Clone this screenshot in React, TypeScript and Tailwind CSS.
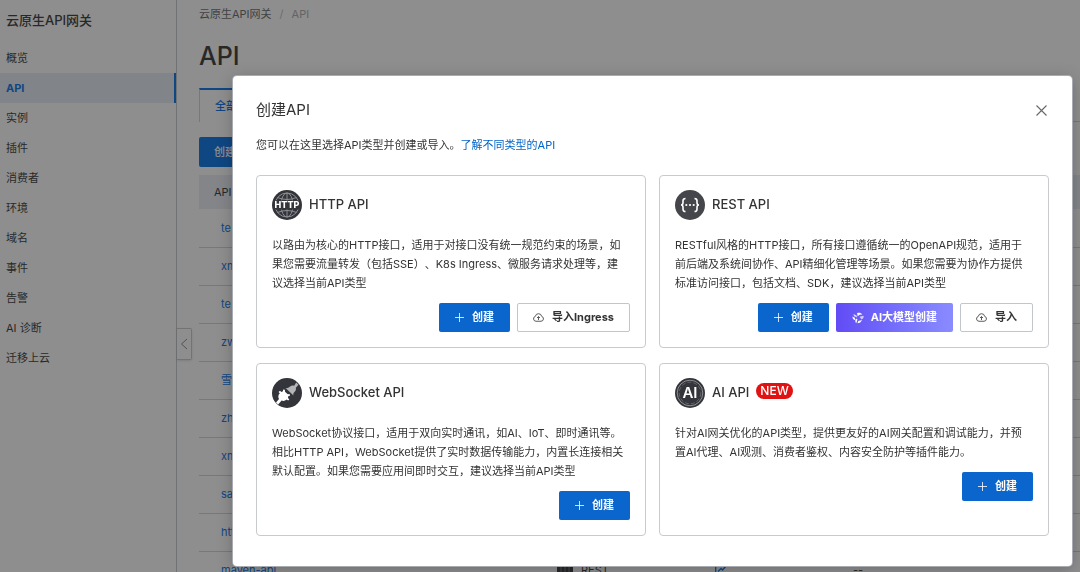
import type { ReactNode } from 'react';

type MenuItem = {
    label: string;
    active?: boolean;
}

const menu: MenuItem[] = [
    { label: '概览' },
    { label: 'API', active: true },
    { label: '实例' },
    { label: '插件' },
    { label: '消费者' },
    { label: '环境' },
    { label: '域名' },
    { label: '事件' },
    { label: '告警' },
    { label: 'AI 诊断' },
    { label: '迁移上云' },
];

const apis = ['te', 'xm', 'te', 'zw', '雪', 'zh', 'xm', 'sa', 'htt'];

function PlusIcon() {
    return (
        <svg className="h-[9px] w-[9px]" viewBox="0 0 9 9" fill="none" stroke="currentColor" strokeWidth="0.8" aria-hidden="true">
            <path d="M4.5 0v9M0 4.5h9" />
        </svg>
    );
}

function CloudUploadIcon() {
    return (
        <svg className="h-[11px] w-[11px]" viewBox="0 0 22 20" fill="none" stroke="currentColor" strokeWidth="1.6" strokeLinejoin="round" aria-hidden="true">
            <path d="M6 17.5a5 5 0 0 1-1.3-9.8 6.4 6.4 0 0 1 12.6 0A5 5 0 0 1 16 17.5Z" />
            <path d="M11 15V8.5M8 11l3-3 3 3" />
        </svg>
    );
}

function SparkIcon() {
    return (
        <svg className="h-3 w-3" viewBox="0 0 24 24" fill="currentColor" aria-hidden="true">
            <path d="M3 4l6 3 1.500 4L4 8.500Z" opacity=".75" />
            <path d="M10 2.500c4-2 8.500-.5 10.500 2.500l-5.500.5-3.500 3Z" />
            <path d="M1 9l4.500 2.500 1.500 5.500C3 15.500.5 12.500 1 9Z" />
            <path d="M8 13l3 2-2.500 7.500c-2-1.500-2.500-5.500-.5-9.500Z" />
            <path d="M15 9.500l8-2c1 3-.5 6-4 7.500Z" opacity=".7" />
            <path d="M12.500 18l7.500-2c-1.500 4-5 6.500-9 6.500Z" />
        </svg>
    );
}

function HttpIcon() {
    return (
        <svg className="h-[30px] w-[30px]" viewBox="0 0 30 30" aria-hidden="true">
            <circle cx="15" cy="15" r="15" fill="#33353a" />
            <g fill="none" stroke="#8b8d92" strokeWidth="1">
                <circle cx="15" cy="15" r="12" />
                <ellipse cx="15" cy="15" rx="6" ry="12" />
                <path d="M15 3v24M5.500 7.500q9.500 4 19 0M5.500 22.500q9.500-4 19 0" />
            </g>
            <rect x="1" y="10.500" width="28" height="9" fill="#33353a" />
            <text x="15" y="18.300" textAnchor="middle" fill="#fff" fontSize="9" fontWeight="800" fontFamily="Inter, sans-serif">HTTP</text>
        </svg>
    );
}

function RestIcon() {
    return (
        <svg className="h-[30px] w-[30px]" viewBox="0 0 30 30" aria-hidden="true">
            <circle cx="15" cy="15" r="15" fill="#44464b" />
            <g fill="none" stroke="#fff" strokeWidth="1.600">
                <path d="M10.500 8.500c-2 0-2.500.8-2.500 2.300v2c0 1.400-.6 2.200-2 2.200 1.400 0 2 .8 2 2.200v2c0 1.500.5 2.300 2.500 2.300" />
                <path d="M19.500 8.500c2 0 2.500.8 2.500 2.300v2c0 1.400.6 2.200 2 2.200-1.400 0-2 .8-2 2.200v2c0 1.500-.5 2.300-2.500 2.300" />
            </g>
            <g fill="#fff">
                <circle cx="11.300" cy="15" r="1.100" />
                <circle cx="15" cy="15" r="1.100" />
                <circle cx="18.700" cy="15" r="1.100" />
            </g>
        </svg>
    );
}

function WebSocketIcon() {
    return (
        <svg className="h-[30px] w-[30px]" viewBox="0 0 30 30" aria-hidden="true">
            <circle cx="15" cy="15" r="15" fill="#33353a" />
            <path d="M13.500 10c1.500.5 3-.2 4.300-1.300 1.500-1.200 3-1.500 4.400-.9l2-3.300 2.300 2.300-2.700 2.900c.5 1.600 0 3-1.300 4.300-1.200 1.200-1.500 2.200-1 3.400Z" fill="#b4b5b7" />
            <path d="M4 24.500l3-3.500c-1.200-2-.8-4.300.8-5.700l-1.300-1.300 1.500-1.200 1.400 1.200 1.500-.8.3-1.600 1.700.2.100 2 2.800 2.400 1.900-.1.200 1.700-1.700.5-.2 1.700 1.300 1.400-1.200 1.200-1.500-1c-1.600 1.400-3.400 1.700-5 .9l-3.400 4q-1.300-.9-2.200-2Z" fill="#fff" />
        </svg>
    );
}

function AiIcon() {
    return (
        <svg className="h-[30px] w-[30px]" viewBox="0 0 30 30" aria-hidden="true">
            <circle cx="15" cy="15" r="15" fill="#33353a" />
            <circle cx="15" cy="15" r="12.800" fill="none" stroke="#a2a4a8" strokeWidth="0.800" />
            <circle cx="15" cy="15" r="10.800" fill="none" stroke="#7d7f84" strokeWidth="0.600" strokeDasharray="4 2" />
            <text x="15" y="20.300" textAnchor="middle" fill="#fff" fontSize="15" fontWeight="600" fontFamily="Inter, sans-serif">AI</text>
        </svg>
    );
}

function CreateButton() {
    return (
        <button className="flex h-[29px] items-center gap-2 rounded-xs bg-[#0a66cc] px-4 font-bold text-white">
            <PlusIcon />
            创建
        </button>
    );
}

function ImportButton({ label }: { label: string }) {
    return (
        <button className="flex h-[29px] items-center gap-2 rounded-xs border border-[#c0c6cc] bg-white px-[15px] font-bold text-[#333]">
            <CloudUploadIcon />
            {label}
        </button>
    );
}

type CardProps = {
    icon: ReactNode;
    title: string;
    isNew?: boolean;
    description: string;
    children: ReactNode;
}

function ApiCard({ icon, title, isNew, description, children }: CardProps) {
    return (
        <section className="rounded border border-[#c8cacd] px-[15px] pt-[14px] pb-[15px]">
            <div className="flex gap-[7px]">
                {icon}
                <h3 className="mt-[5px] text-[13px] leading-[18px] font-medium text-[#333]">{title}</h3>
                {isNew && (
                    <span className="mt-[5px] h-4 rounded-full bg-[#e01212] px-1 text-xs leading-4 font-medium text-white">NEW</span>
                )}
            </div>
            <p className="mt-4 pr-1 leading-[19px] text-[#333]">{description}</p>
            <div className="mt-[10px] flex justify-end gap-[7px]">{children}</div>
        </section>
    );
}

function CreateDialog() {
    return (
        <div className="fixed inset-0 overflow-hidden bg-[#1e1e1e]/50 pt-[76px] pr-2 pl-[233px]">
            <div role="dialog" aria-labelledby="dialog-title" className="rounded bg-white px-[23px] pt-6 pb-[30px] shadow-[0_0_0_1px_#a9abb2,0_3px_16px_rgba(0,0,0,0.25)]">
                <div className="flex items-center justify-between">
                    <h2 id="dialog-title" className="text-[15px] leading-5 text-[#333]">创建API</h2>
                    <button aria-label="关闭" className="p-0.5 text-[#666]">
                        <svg className="h-[11px] w-[11px]" viewBox="0 0 11 11" fill="none" stroke="currentColor" strokeWidth="1.100">
                            <path d="M.5.5l10 10M10.500.5l-10 10" />
                        </svg>
                    </button>
                </div>
                <p className="mt-[15px] leading-5 text-[#333]">
                    您可以在这里选择API类型并创建或导入。
                    <a href="#types" className="text-[#0064c8]">了解不同类型的API</a>
                </p>
                <div className="mt-5 grid grid-cols-2 gap-x-[13px] gap-y-[15px]">
                    <ApiCard
                        icon={<HttpIcon />}
                        title="HTTP API"
                        description="以路由为核心的HTTP接口，适用于对接口没有统一规范约束的场景，如果您需要流量转发（包括SSE）、K8s Ingress、微服务请求处理等，建议选择当前API类型"
                    >
                        <CreateButton />
                        <ImportButton label="导入Ingress" />
                    </ApiCard>
                    <ApiCard
                        icon={<RestIcon />}
                        title="REST API"
                        description="RESTful风格的HTTP接口，所有接口遵循统一的OpenAPI规范，适用于前后端及系统间协作、API精细化管理等场景。如果您需要为协作方提供标准访问接口，包括文档、SDK，建议选择当前API类型"
                    >
                        <CreateButton />
                        <button className="flex h-[29px] items-center gap-[7px] rounded-xs bg-linear-to-r from-[#624bf5] to-[#8a8bff] px-4 font-bold text-white">
                            <SparkIcon />
                            AI大模型创建
                        </button>
                        <ImportButton label="导入" />
                    </ApiCard>
                    <ApiCard
                        icon={<WebSocketIcon />}
                        title="WebSocket API"
                        description="WebSocket协议接口，适用于双向实时通讯，如AI、IoT、即时通讯等。相比HTTP API，WebSocket提供了实时数据传输能力，内置长连接相关默认配置。如果您需要应用间即时交互，建议选择当前API类型"
                    >
                        <CreateButton />
                    </ApiCard>
                    <ApiCard
                        icon={<AiIcon />}
                        title="AI API"
                        isNew
                        description="针对AI网关优化的API类型，提供更友好的AI网关配置和调试能力，并预置AI代理、AI观测、消费者鉴权、内容安全防护等插件能力。"
                    >
                        <CreateButton />
                    </ApiCard>
                </div>
            </div>
        </div>
    );
}

export default function App() {
    return (
        <div className="flex h-screen overflow-hidden bg-white font-[Inter,'Noto_Sans_CJK_SC',sans-serif] text-[11px] text-[#333] [text-spacing-trim:space-all]">
            <aside className="w-[177px] shrink-0 border-r border-[#c4c6c8]">
                <h2 className="mt-[10px] mb-[13px] pl-[6px] text-[13px] leading-5 font-medium">云原生API网关</h2>
                <nav>
                    {menu.map((item) => (
                        <a
                            key={item.label}
                            href="#menu"
                            className={item.active
                                ? 'block border-r-2 border-[#0070e8] bg-[#e4eaf5] pl-[6px] leading-[30px] font-bold text-[#0070e8]'
                                : 'block pl-[6px] leading-[30px]'}
                        >
                            {item.label}
                        </a>
                    ))}
                </nav>
            </aside>
            <button aria-label="收起" className="mt-[328px] flex h-8 w-[15px] shrink-0 items-center justify-center self-start rounded-r-xs border border-l-0 border-[#c4c8cc] text-[#888] shadow-sm">
                <svg className="h-3 w-2" viewBox="0 0 8 12" fill="none" stroke="currentColor">
                    <path d="M7 1 1.500 6 7 11" />
                </svg>
            </button>
            <main className="min-w-0 flex-1 pl-[7px]">
                <div className="mt-1 flex gap-2 leading-5 text-[#666]">
                    <a href="#gateway">云原生API网关</a>
                    <span className="text-[#bbb]">/</span>
                    <span className="text-[#aaa]">API</span>
                </div>
                <h1 className="mt-[15px] text-[25px] leading-[34px] font-medium">API</h1>
                <div className="mt-[15px] flex">
                    <button className="h-[34px] border-t-2 border-l border-t-[#0070e8] border-l-[#d0d2d4] px-[15px] font-medium text-[#0070e8]">全部</button>
                    <div className="flex-1 border-b border-[#d0d2d4]"></div>
                </div>
                <button className="mt-[15px] h-[30px] rounded-xs bg-[#0070e8] px-[15px] font-medium text-white">创建API</button>
                <table className="mt-2 w-full table-fixed text-left">
                    <thead>
                        <tr className="h-[34px] bg-[#e9edf5]">
                            <th className="w-[358px] pl-[15px] font-normal">API</th>
                            <th className="w-[158px]"></th>
                            <th className="w-[138px]"></th>
                            <th></th>
                        </tr>
                    </thead>
                    <tbody>
                        {apis.map((name, i) => (
                            <tr key={i} className="h-[38px] border-b border-[#d0d2d4]">
                                <td className="pl-[22px]"><a href="#api" className="text-[#0070e8]">{name}</a></td>
                                <td></td>
                                <td></td>
                                <td></td>
                            </tr>
                        ))}
                        <tr className="h-[38px]">
                            <td className="pl-[22px]"><a href="#api" className="text-[#0070e8]">maven-api</a></td>
                            <td>
                                <span className="flex items-center gap-2">
                                    <svg className="h-4 w-4" viewBox="0 0 16 16">
                                        <rect width="16" height="16" rx="5" fill="#333" />
                                        <path d="M4 1v14M8 1v14M12 1v14" stroke="#888" strokeWidth=".8" />
                                    </svg>
                                    REST
                                </span>
                            </td>
                            <td>
                                <svg className="h-3 w-3" viewBox="0 0 12 12" fill="none" stroke="#0070e8" strokeWidth="1.300">
                                    <path d="M.7 0v11.300H12M3 7.500l3-3 1.500 1.500 4-4.500" />
                                </svg>
                            </td>
                            <td>--</td>
                        </tr>
                    </tbody>
                </table>
            </main>
            <CreateDialog />
        </div>
    );
}
